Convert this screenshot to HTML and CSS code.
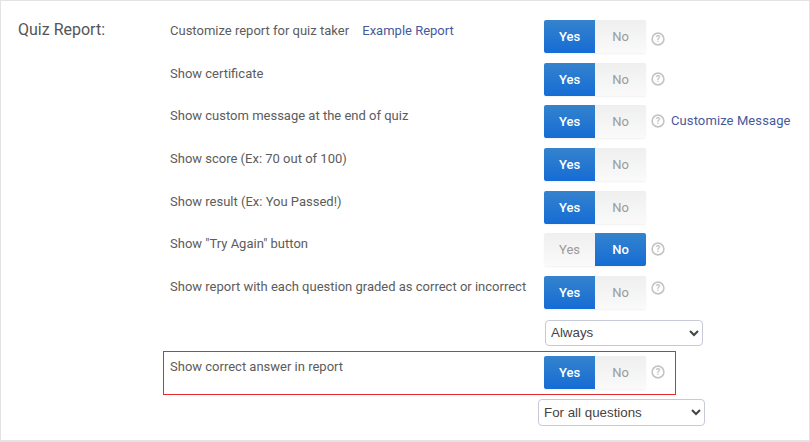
FILE: index.html
```html
<!DOCTYPE html>
<html lang="en">
<head>
<meta charset="utf-8">
<title>Quiz Report</title>
<link rel="stylesheet" href="styles.css">
</head>
<body>
<main class="panel">
  <h2 class="section-label">Quiz Report:</h2>
  <div class="rows">
    <div class="row">
      <div class="row-label">Customize report for quiz taker <a class="link link-example" href="#">Example Report</a></div>
      <div class="toggle"><span class="opt on">Yes</span><span class="opt">No</span></div>
      <svg class="help help-low" viewBox="0 0 14 14"><circle cx="7" cy="7" r="5.9"/><text x="7" y="10">?</text></svg>
    </div>
    <div class="row">
      <div class="row-label">Show certificate</div>
      <div class="toggle"><span class="opt on">Yes</span><span class="opt">No</span></div>
      <svg class="help" viewBox="0 0 14 14"><circle cx="7" cy="7" r="5.9"/><text x="7" y="10">?</text></svg>
    </div>
    <div class="row">
      <div class="row-label">Show custom message at the end of quiz</div>
      <div class="toggle"><span class="opt on">Yes</span><span class="opt">No</span></div>
      <svg class="help" viewBox="0 0 14 14"><circle cx="7" cy="7" r="5.9"/><text x="7" y="10">?</text></svg>
      <a class="link link-message" href="#">Customize Message</a>
    </div>
    <div class="row">
      <div class="row-label">Show score (Ex: 70 out of 100)</div>
      <div class="toggle"><span class="opt on">Yes</span><span class="opt">No</span></div>
    </div>
    <div class="row">
      <div class="row-label">Show result (Ex: You Passed!)</div>
      <div class="toggle"><span class="opt on">Yes</span><span class="opt">No</span></div>
    </div>
    <div class="row">
      <div class="row-label">Show "Try Again" button</div>
      <div class="toggle"><span class="opt">Yes</span><span class="opt on">No</span></div>
      <svg class="help" viewBox="0 0 14 14"><circle cx="7" cy="7" r="5.9"/><text x="7" y="10">?</text></svg>
    </div>
    <div class="row row-tight">
      <div class="row-label">Show report with each question graded as correct or incorrect</div>
      <div class="toggle"><span class="opt on">Yes</span><span class="opt">No</span></div>
      <svg class="help help-high" viewBox="0 0 14 14"><circle cx="7" cy="7" r="5.9"/><text x="7" y="10">?</text></svg>
    </div>
    <div class="select-row">
      <select class="select select-always"><option>Always</option></select>
    </div>
    <div class="row row-marked">
      <div class="row-label">Show correct answer in report</div>
      <div class="toggle"><span class="opt on">Yes</span><span class="opt">No</span></div>
      <svg class="help" viewBox="0 0 14 14"><circle cx="7" cy="7" r="5.9"/><text x="7" y="10">?</text></svg>
    </div>
    <div class="select-row select-row-last">
      <select class="select select-questions"><option>For all questions</option></select>
    </div>
  </div>
</main>
</body>
</html>
```
FILE: styles.css
```css
* { box-sizing: border-box; }
html, body { margin: 0; height: 100%; }
body {
  background: #fff;
  font-family: Roboto, "Liberation Sans", sans-serif;
  color: #555;
}
.panel {
  display: flex;
  width: 810px;
  height: 442px;
  padding: 19px 0 0 17px;
  border: 1px solid #e3e3e3;
  border-width: 1px 1px 2px 1px;
}
.section-label {
  flex: none;
  width: 145px;
  margin: 0;
  padding: 0 0 0 0;
  font-size: 16px;
  font-weight: 400;
  line-height: 19px;
  color: #555;
}
.rows {
  flex: 1;
  display: flex;
  flex-direction: column;
  padding-left: 7px;
}
.row {
  display: flex;
  align-items: flex-start;
  height: 42.67px;
}
.row-tight { height: 44px; }
.row-label {
  flex: none;
  width: 374px;
  padding-top: 3px;
  font-size: 13px;
  line-height: 16px;
  color: #5c5c5c;
  white-space: nowrap;
}
.link { color: #46599c; text-decoration: none; }
.link-example { margin-left: 10px; }
.link-message { margin-left: 6px; font-size: 13px; line-height: 16px; padding-top: 8px; letter-spacing: 0.1px; }
.toggle {
  flex: none;
  display: flex;
  width: 102px;
  height: 33px;
  border-radius: 2px;
  box-shadow: 0 1px 2px rgba(0, 0, 0, 0.06);
}
.opt {
  flex: 1;
  display: flex;
  align-items: center;
  justify-content: center;
  font-size: 13px;
  color: #9a9a9a;
  background: linear-gradient(#efefef, #fafafa);
}
.opt:first-child { border-radius: 2px 0 0 2px; }
.opt:last-child { border-radius: 0 2px 2px 0; }
.opt.on {
  color: #fff;
  font-weight: 500;
  background: linear-gradient(#3583cd, #156cd4);
}
.help {
  flex: none;
  width: 14px;
  height: 14px;
  margin: 9px 0 0 5px;
}
.help-low { margin-top: 12px; }
.help-high { margin-top: 5px; }
.help circle { fill: none; stroke: #c4c4c4; stroke-width: 1.6; }
.help text {
  font-family: Roboto, sans-serif;
  font-size: 9px;
  font-weight: 700;
  fill: #c4c4c4;
  text-anchor: middle;
}
.select-row {
  display: flex;
  height: 36px;
  padding-left: 375px;
}
.select-row-last {
  height: 27px;
  margin-top: 0;
  padding-left: 368px;
}
.select {
  height: 26px;
  padding: 0 0 0 1px;
  border: 1px solid #c6cad6;
  border-radius: 4px;
  background: #fff;
  font-family: "Liberation Sans", Arial, sans-serif;
  font-size: 13.33px;
  color: #444;
}
.select-always { width: 158px; }
.select-questions { width: 167px; height: 27px; }
.row-marked {
  position: relative;
  height: 43px;
}
.row-marked::before {
  content: "";
  position: absolute;
  left: -7px;
  top: -5px;
  width: 511px;
  height: 42px;
  border: 1px solid #e52b2b;
  pointer-events: none;
}
```
